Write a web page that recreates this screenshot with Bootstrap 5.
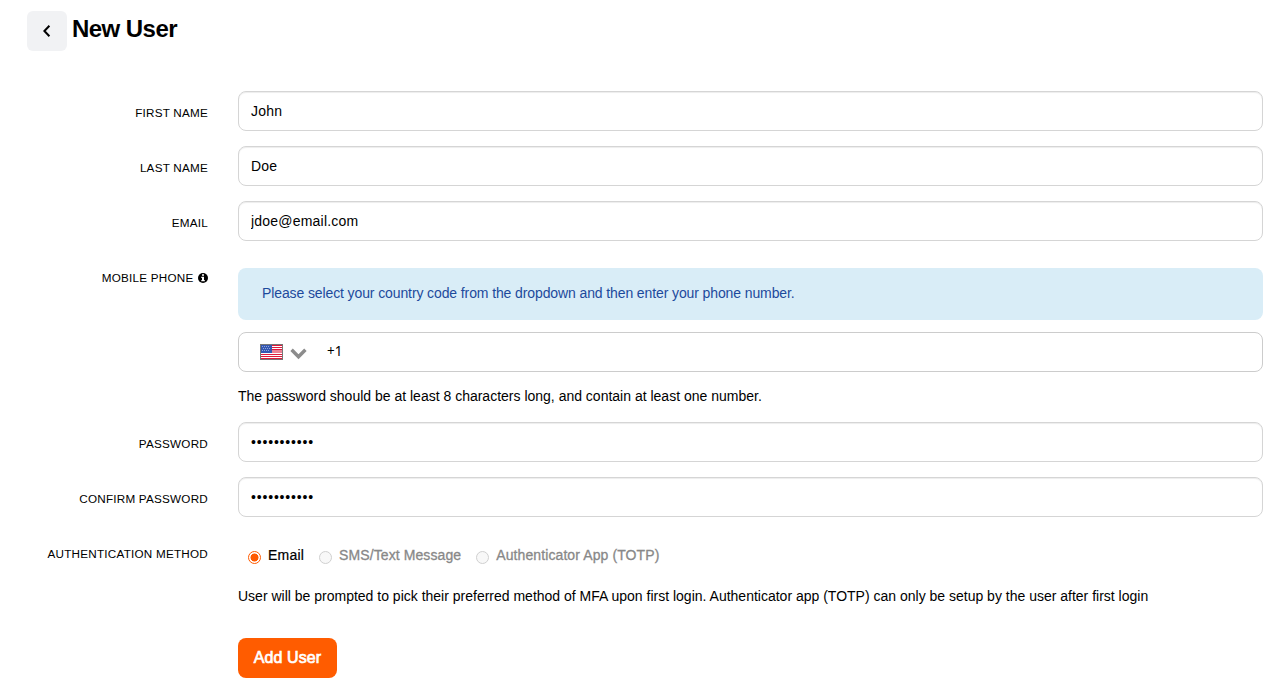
<!DOCTYPE html>
<html lang="en">
<head>
<meta charset="utf-8">
<meta name="viewport" content="width=device-width, initial-scale=1">
<title>New User</title>
<link href="https://cdn.jsdelivr.net/npm/bootstrap@5.3.0/dist/css/bootstrap.min.css" rel="stylesheet">
<style>
  body { font-family: "Liberation Sans", Arial, sans-serif; font-size: 14px; line-height: 20px; color: #000; background: #fff; }
  .page { padding: 11px 17px 14px 0; }
  .page-head { padding-left: 27px; height: 40px; margin-bottom: 40px; gap: 5px; }
  .back-btn { width: 40px; height: 40px; background: #f1f2f4; border-radius: 6px; border: 0; }
  .page-title { font-size: 24px; line-height: 36px; letter-spacing: -.55px; font-weight: 700; }
  .form-line { gap: 30px; }
  .gap-below { margin-bottom: 15px; }
  .line-label { width: 208px; font-size: 11.7px; letter-spacing: .23px; line-height: 20px; padding-top: 12px; text-transform: uppercase; }
  .line-label svg { vertical-align: -1px; margin-left: 1px; }
  .field { height: 40px; padding: 6px 12px; font-size: 14px; letter-spacing: .21px; line-height: 20px; color: #000; border: 1px solid #d5d5d5; border-radius: 8px; box-shadow: inset 0 1px 1px rgba(0,0,0,.075); }
  .secret { letter-spacing: .82px; }
  .phone-body { padding-top: 12px; }
  .phone { border-color: #ccc; box-shadow: none; margin-top: 12px; padding: 0 21px; }
  .caret { margin: 4px 0 0 7px; }
  .dial-code { margin: -2px 0 0 20px; font-family: "Noto Sans", sans-serif; font-size: 13.5px; letter-spacing: 0; }
  .hint { margin: 14px 0 16px; }
  .note { height: 52px; background: #d9edf7; color: #1d4a9c; border-radius: 8px; padding: 15px 24px; letter-spacing: -.11px; }
  .choices { padding: 13px 0 0 10px; gap: 15px; }
  .choice { font-size: 14px; letter-spacing: .1px; gap: 7px; color: #888; -webkit-text-stroke: .3px currentColor; }
  .choice.picked { color: #000; letter-spacing: .2px; -webkit-text-stroke-width: .2px; }
  .dot { width: 13px; height: 13px; border: 1px solid #d0d0d0; border-radius: 50%; background: #f8f8f8; margin-top: 4px; }
  .picked .dot { border-color: #ff5a00; background: radial-gradient(circle, #ff5a00 3.7px, #fff 4.3px); }
  .mfa-hint { margin: 21px 0 32px; }
  .add-btn { width: 99px; height: 40px; padding: 0; background: #ff5c00; color: #fff; border-radius: 8px; border: 0; font-size: 16px; letter-spacing: .08px; -webkit-text-stroke: .7px #fff; }
</style>
</head>
<body>
<main class="page">
  <header class="page-head d-flex">
    <button class="back-btn btn p-0 d-flex align-items-center justify-content-center" aria-label="Back">
      <svg width="10" height="14" viewBox="0 0 10 14" fill="none" stroke="#000" stroke-width="2"><path d="M7.4 1.8 2.4 7l5 5.2"/></svg>
    </button>
    <h1 class="page-title mb-0">New User</h1>
  </header>
  <form>
    <div class="form-line gap-below d-flex">
      <label class="line-label flex-shrink-0 text-end">First Name</label>
      <input class="form-control field" type="text" value="John">
    </div>
    <div class="form-line gap-below d-flex">
      <label class="line-label flex-shrink-0 text-end">Last Name</label>
      <input class="form-control field" type="text" value="Doe">
    </div>
    <div class="form-line gap-below d-flex">
      <label class="line-label flex-shrink-0 text-end">Email</label>
      <input class="form-control field" type="text" value="jdoe@email.com">
    </div>
    <div class="form-line d-flex">
      <label class="line-label flex-shrink-0 text-end">Mobile Phone
        <svg width="10" height="10" viewBox="0 0 10 10"><circle cx="5" cy="5" r="5"/><path fill="#fff" d="M4 1.2h2v1.6H4zM3.3 3.8H6v3.3h.8v1.2H3.3V7.1H4V5h-.7z"/></svg>
      </label>
      <div class="phone-body flex-grow-1">
        <div class="note">Please select your country code from the dropdown and then enter your phone number.</div>
        <div class="field phone d-flex align-items-center">
          <svg width="23" height="16" viewBox="0 0 23 16">
            <path fill="#fff" d="M0 0h23v16H0z"/>
            <path fill="#e0183c" d="M1 1h21v1H1zM1 3h21v1H1zM1 5h21v1H1zM1 10h21v1H1zM1 12h21v1H1zM1 14h21v1H1z"/>
            <path fill="#ec8296" d="M11 6h11v3H11z"/>
            <path fill="#3457b1" d="M1 1h11v8H1z"/>
            <path fill="#8fa5dd" d="M2 2h1v1H2zM4 2h1v1H4zM6 2h1v1H6zM8 2h1v1H8zM3 4h1v1H3zM5 4h1v1H5zM7 4h1v1H7zM9 4h1v1H9zM2 6h1v1H2zM4 6h1v1H4zM6 6h1v1H6zM8 6h1v1H8z"/>
            <path fill="#777" fill-rule="evenodd" d="M0 0h23v16H0zM1 1v14h21V1z"/>
          </svg>
          <svg class="caret" width="17" height="12" viewBox="0 0 17 12" fill="none" stroke="#8c8c8c" stroke-width="3.4"><path d="M1.6 1.8 8.5 8.8l6.9-7"/></svg>
          <span class="dial-code">+1</span>
        </div>
        <p class="hint">The password should be at least 8 characters long, and contain at least one number.</p>
      </div>
    </div>
    <div class="form-line gap-below d-flex">
      <label class="line-label flex-shrink-0 text-end">Password</label>
      <input class="form-control field secret" type="password" value="password123">
    </div>
    <div class="form-line gap-below d-flex">
      <label class="line-label flex-shrink-0 text-end">Confirm Password</label>
      <input class="form-control field secret" type="password" value="password123">
    </div>
    <div class="form-line d-flex">
      <label class="line-label flex-shrink-0 text-end">Authentication Method</label>
      <div class="flex-grow-1">
        <div class="choices d-flex">
          <label class="choice picked d-flex align-items-center"><i class="dot"></i><span>Email</span></label>
          <label class="choice d-flex align-items-center"><i class="dot"></i><span>SMS/Text Message</span></label>
          <label class="choice d-flex align-items-center"><i class="dot"></i><span>Authenticator App (TOTP)</span></label>
        </div>
        <p class="mfa-hint">User will be prompted to pick their preferred method of MFA upon first login. Authenticator app (TOTP) can only be setup by the user after first login</p>
        <button class="btn add-btn" type="button">Add User</button>
      </div>
    </div>
  </form>
</main>
<script src="https://cdn.jsdelivr.net/npm/bootstrap@5.3.0/dist/js/bootstrap.bundle.min.js"></script>
</body>
</html>
